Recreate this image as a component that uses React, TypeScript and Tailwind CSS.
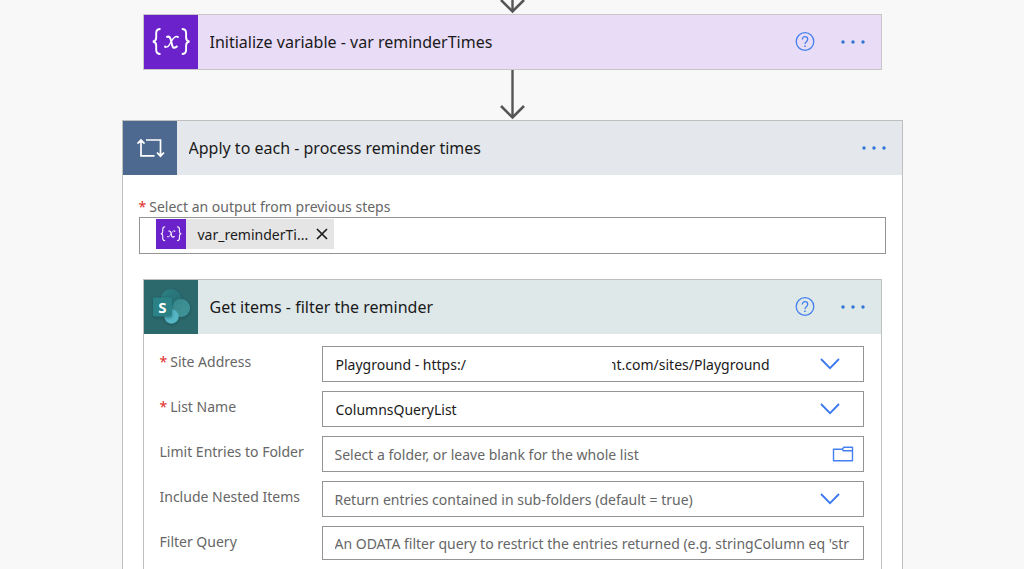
import type { ReactNode } from 'react';

const NBSP = '\u00a0';

function Arrow({ length }: { length: number }) {
  return (
    <svg
      width="26"
      height={length}
      viewBox={`0 0 26 ${length}`}
      fill="none"
      stroke="#555"
      className="mx-auto block"
      aria-hidden="true"
    >
      <path d={`M13.500 0V${length - 2}`} strokeWidth="2.400" />
      <path d={`M2 ${length - 14}L13.500 ${length - 2.5}L25 ${length - 14}`} strokeWidth="2.600" />
    </svg>
  );
}

function VariableIcon({ size }: { size: number }) {
  return (
    <svg width={size} height={size} viewBox="0 0 54 54" fill="none" stroke="#fff" aria-hidden="true">
      <path
        d="M16.500 14c-3.200 0-4.300 1.100-4.300 4v4.600c0 2.500-.9 3.600-3.400 3.900 2.500.3 3.400 1.400 3.400 3.900v4.600c0 2.900 1.100 4 4.300 4"
        strokeWidth="1.900"
      />
      <path
        d="M37.800 14c3.200 0 4.300 1.100 4.300 4v4.600c0 2.500.9 3.600 3.400 3.900-2.500.3-3.400 1.400-3.400 3.900v4.600c0 2.900-1.100 4-4.300 4"
        strokeWidth="1.900"
      />
      <path d="M22.300 22.200c3-1.600 4.300.2 5 4.500.8 5 1.900 8.200 6.200 4.300" strokeWidth="2" />
      <path d="M34 21.700c-3.200-1.200-4.900 1.300-6.900 5-2.100 4-3.400 6.200-6.300 5.200" strokeWidth="1.300" />
      <circle cx="33.800" cy="22" r="1.100" fill="#fff" stroke="none" />
      <circle cx="21.200" cy="31.700" r="1.100" fill="#fff" stroke="none" />
    </svg>
  );
}

function LoopIcon() {
  return (
    <svg width="54" height="54" viewBox="0 0 54 54" fill="none" stroke="#fff" strokeWidth="1.700" aria-hidden="true">
      <path d="M31.500 34.800H18V19.500M14.500 22.700L18 19l3.500 3.700" />
      <path d="M23 19h14.500v15.500M34 31.500l3.500 3.700 3.500-3.700" />
      <path d="M18 18.500l2.500 3h-5zM37.500 35.700l2.500-3h-5z" fill="#fff" stroke="none" />
    </svg>
  );
}

function SharePointIcon() {
  return (
    <svg width="54" height="54" viewBox="0 0 54 54" aria-hidden="true">
      <defs>
        <linearGradient id="sp-top" x1="0" y1="0" x2="1" y2="1">
          <stop offset="0" stopColor="#2f8084" />
          <stop offset="1" stopColor="#23696d" />
        </linearGradient>
        <linearGradient id="sp-right" x1="0" y1="0" x2="1" y2="1">
          <stop offset="0" stopColor="#37888c" />
          <stop offset="1" stopColor="#409599" />
        </linearGradient>
        <filter id="sp-shadow" x="-30%" y="-30%" width="160%" height="160%">
          <feDropShadow dx="0" dy="1" stdDeviation="1.500" floodColor="#0b3538" floodOpacity="0.500" />
        </filter>
      </defs>
      <g filter="url(#sp-shadow)">
        <circle cx="27" cy="19.500" r="10.500" fill="url(#sp-top)" />
        <circle cx="37" cy="28" r="9" fill="url(#sp-right)" />
        <circle cx="27.500" cy="36.500" r="7.200" fill="#55b5c4" />
      </g>
      <rect x="9" y="17.500" width="19" height="19" rx="1.500" fill="#2b8286" filter="url(#sp-shadow)" />
      <text
        x="18.500"
        y="32.500"
        textAnchor="middle"
        fill="#fff"
        fontSize="15"
        fontWeight="700"
        fontFamily="'Noto Sans', sans-serif"
      >
        S
      </text>
    </svg>
  );
}

function HelpButton() {
  return (
    <button type="button" aria-label="Help" className="grid size-5 shrink-0 place-items-center">
      <svg width="20" height="20" viewBox="0 0 20 20" fill="none" stroke="#4480f0" aria-hidden="true">
        <circle cx="10" cy="9.500" r="8.800" strokeWidth="1.300" />
        <path
          d="M7.300 7.500c0-1.900 1.100-2.900 2.700-2.900s2.700 1 2.700 2.600c0 2.400-2.700 2.500-2.700 4.900"
          strokeWidth="1.300"
        />
        <circle cx="10" cy="14.200" r=".85" fill="#4480f0" stroke="none" />
      </svg>
    </button>
  );
}

function MoreButton() {
  return (
    <button type="button" aria-label="More options" className="grid h-5 w-7 shrink-0 place-items-center">
      <svg width="28" height="6" viewBox="0 0 28 6" fill="#2f75d6" aria-hidden="true">
        <circle cx="4" cy="3" r="1.700" />
        <circle cx="14" cy="3" r="1.700" />
        <circle cx="24" cy="3" r="1.700" />
      </svg>
    </button>
  );
}

type HeaderProps = {
  icon: ReactNode;
  iconClass: string;
  barClass: string;
  title: string;
  help?: boolean;
};

function CardHeader({ icon, iconClass, barClass, title, help }: HeaderProps) {
  return (
    <header className={`flex h-[54px] items-center pr-3.5 ${barClass}`}>
      <span className={`size-[54px] shrink-0 ${iconClass}`}>{icon}</span>
      <h2 className="ml-3 min-w-0 flex-1 truncate text-[16px] text-[#1a1a1a]">{title}</h2>
      <div className="flex items-center gap-6">
        {help && <HelpButton />}
        <MoreButton />
      </div>
    </header>
  );
}

function Chevron() {
  return (
    <svg
      width="20"
      height="12"
      viewBox="0 0 20 12"
      fill="none"
      stroke="#3b78f0"
      strokeWidth="1.800"
      className="pointer-events-none absolute top-3 right-6"
      aria-hidden="true"
    >
      <path d="M1 1l9 9.200L19 1" />
    </svg>
  );
}

function FolderIcon() {
  return (
    <svg width="22" height="16" viewBox="0 0 22 16" fill="none" stroke="#4480f0" strokeWidth="1.400" aria-hidden="true">
      <path d="M1.500 3.200h8.700l1.700-2h8.600v13.600h-19zM10.200 3.200l1 1.500h9.300" strokeLinejoin="round" />
    </svg>
  );
}

function Row({ id, label, required, children }: { id: string; label: string; required?: boolean; children: ReactNode }) {
  return (
    <div className="flex items-start">
      <label htmlFor={id} className="w-[162px] shrink-0 pt-1 leading-6 text-[#666]">
        {required && <span className="mr-[3px] text-[#e02b2b]">*</span>}
        {label}
      </label>
      <div className="relative min-w-0 flex-1">{children}</div>
    </div>
  );
}

const field = 'block w-full appearance-none rounded-none border border-[#949494] bg-white outline-none';

export default function App() {
  return (
    <main className="h-screen overflow-hidden bg-[#f8f8f8] font-['Noto_Sans',sans-serif] text-[14px]">
      <div className="mx-auto max-w-[781px]">
        <Arrow length={14} />
        <section className="mx-[21px] border border-[#c8c6c8]">
          <CardHeader
            icon={<VariableIcon size={54} />}
            iconClass="bg-[#6b22cb]"
            barClass="bg-[#e9dcf6]"
            title="Initialize variable - var reminderTimes"
            help
          />
        </section>
        <Arrow length={50} />
        <section className="border border-[#bfbfbf] bg-white">
          <CardHeader
            icon={<LoopIcon />}
            iconClass="bg-[#4d698f]"
            barClass="bg-[#e4e8ed]"
            title="Apply to each - process reminder times"
          />
          <div className="px-4 pt-[22px]">
            <label htmlFor="output" className="block leading-5 text-[#666]">
              <span className="mr-[3px] text-[#e02b2b]">*</span>
              Select an output from previous steps
            </label>
            <div className="flex h-[37px] items-start border border-[#949494] pt-px pl-4">
              <span className="flex h-[30px] w-[178px] shrink-0 items-center bg-[#e5e5e5]">
                <span className="size-[30px] shrink-0 bg-[#6b22cb]">
                  <VariableIcon size={30} />
                </span>
                <span className="ml-3 flex-1 text-[#1a1a1a]">var_reminderTi...</span>
                <button type="button" aria-label="Remove" className="mr-1 grid size-4 place-items-center">
                  <svg width="12" height="12" viewBox="0 0 12 12" stroke="#1a1a1a" strokeWidth="1.700" aria-hidden="true">
                    <path d="M1 1l10 10M11 1L1 11" />
                  </svg>
                </button>
              </span>
              <input id="output" type="text" className="h-full min-w-0 flex-1 px-2 outline-none" />
            </div>
          </div>
          <section className="mx-5 mt-[25px] border border-[#bfbfbf]">
            <CardHeader
              icon={<SharePointIcon />}
              iconClass="bg-[#2c696d]"
              barClass="bg-[#dfe8e9]"
              title="Get items - filter the reminder"
              help
            />
            <div className="flex flex-col gap-[9px] py-3 pr-[17px] pl-4">
              <Row id="site" label="Site Address" required>
                <select id="site" className={`${field} h-9 pr-12 pl-[13px] text-[#1a1a1a]`}>
                  <option>{`Playground - https:/${NBSP.repeat(39)}nt.com/sites/Playground`}</option>
                </select>
                <span className="absolute top-2 left-[145px] h-5 w-[145px] bg-white" />
                <Chevron />
              </Row>
              <Row id="list" label="List Name" required>
                <select id="list" className={`${field} h-9 pr-12 pl-[13px] text-[#1a1a1a]`}>
                  <option>ColumnsQueryList</option>
                </select>
                <Chevron />
              </Row>
              <Row id="folder" label="Limit Entries to Folder">
                <input
                  id="folder"
                  type="text"
                  placeholder="Select a folder, or leave blank for the whole list"
                  className={`${field} h-9 pr-10 pl-3 placeholder:text-[#666]`}
                />
                <button type="button" aria-label="Browse folders" className="absolute top-2.5 right-2.5">
                  <FolderIcon />
                </button>
              </Row>
              <Row id="nested" label="Include Nested Items">
                <select id="nested" className={`${field} h-9 pr-12 pl-3 text-[#666]`}>
                  <option>Return entries contained in sub-folders (default = true)</option>
                </select>
                <Chevron />
              </Row>
              <Row id="filter" label="Filter Query">
                <input
                  id="filter"
                  type="text"
                  placeholder="An ODATA filter query to restrict the entries returned (e.g. stringColumn eq 'str"
                  className={`${field} h-[34px] pr-2 pl-3 placeholder:text-[#666]`}
                />
              </Row>
              <div className="h-9" />
            </div>
          </section>
        </section>
      </div>
    </main>
  );
}
